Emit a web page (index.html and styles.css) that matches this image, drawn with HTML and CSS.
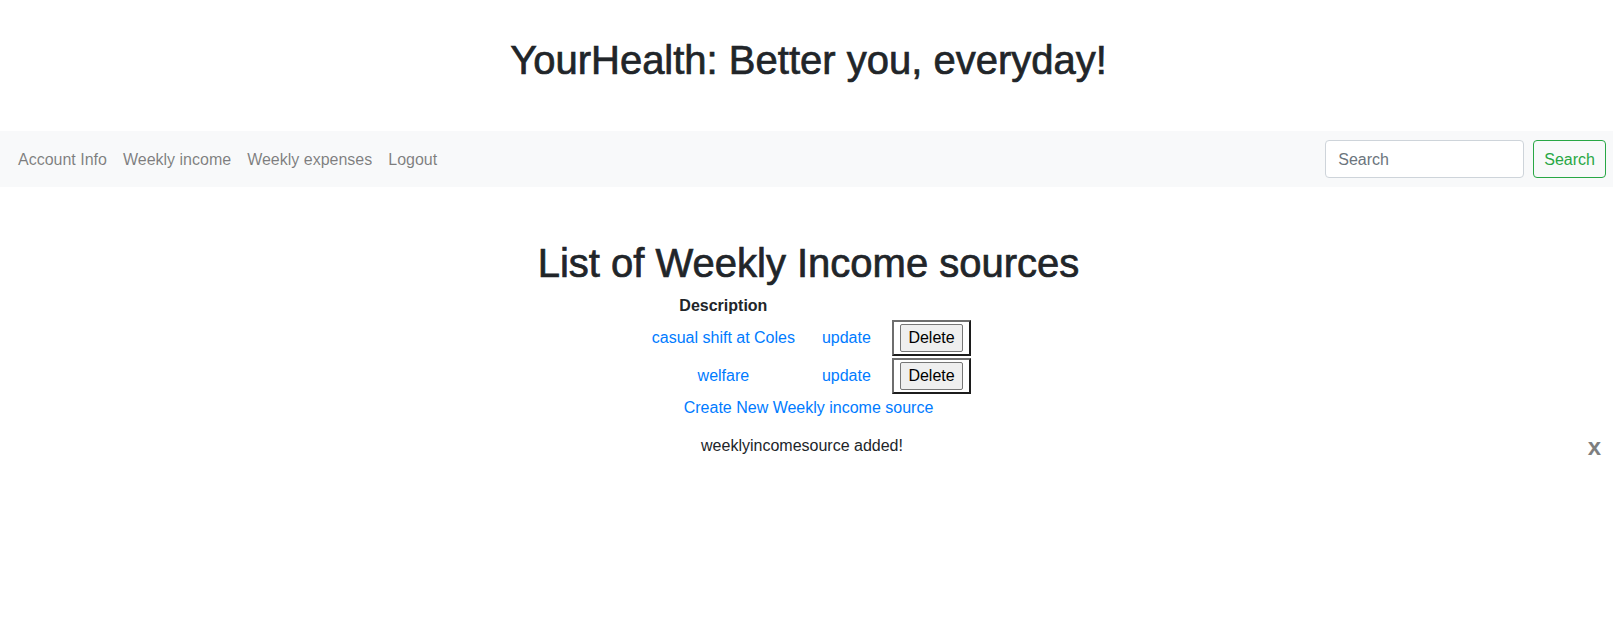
FILE: index.html
```html
<!DOCTYPE html>
<html lang="en">
<head>
<meta charset="utf-8">
<title>YourHealth</title>
<link rel="stylesheet" href="styles.css">
</head>
<body>
<header class="site-header">
  <h1 class="site-title">YourHealth: Better you, everyday!</h1>
</header>
<nav class="navbar">
  <ul class="nav-links">
    <li><a class="nav-link" href="#">Account Info</a></li>
    <li><a class="nav-link" href="#">Weekly income</a></li>
    <li><a class="nav-link" href="#">Weekly expenses</a></li>
    <li><a class="nav-link" href="#">Logout</a></li>
  </ul>
  <form class="search-form">
    <input class="search-input" type="search" placeholder="Search">
    <button class="search-btn" type="button">Search</button>
  </form>
</nav>
<main class="content">
  <h1 class="page-title">List of Weekly Income sources</h1>
  <table class="income-table">
    <thead>
      <tr><th class="col-desc">Description</th><th class="col-update"></th><th class="col-blank"></th></tr>
    </thead>
    <tbody>
      <tr>
        <td class="col-desc"><a href="#">casual shift at Coles</a></td>
        <td class="col-update"><a href="#">update</a></td>
        <td class="col-delete"><button class="delete-btn" type="button">Delete</button></td>
      </tr>
      <tr>
        <td class="col-desc"><a href="#">welfare</a></td>
        <td class="col-update"><a href="#">update</a></td>
        <td class="col-delete"><button class="delete-btn" type="button">Delete</button></td>
      </tr>
    </tbody>
  </table>
  <div class="create-row"><a href="#">Create New Weekly income source</a></div>
  <div class="alert">
    <span class="alert-msg">weeklyincomesource added!</span>
    <button class="close" type="button">x</button>
  </div>
</main>
</body>
</html>
```
FILE: styles.css
```css
* { box-sizing: border-box; }

body {
  margin: 0;
  font-family: "Liberation Sans", Arial, sans-serif;
  font-size: 16px;
  line-height: 1.5;
  color: #212529;
  background: #fff;
}

a { color: #007bff; text-decoration: none; }

.site-header {
  padding: 36px 0 47px 4px;
  text-align: center;
}

.site-title,
.page-title {
  margin: 0;
  font-size: 40px;
  line-height: 48px;
  font-weight: 500;
  color: #212529;
  -webkit-text-stroke: 0.7px #212529;
}

.navbar {
  display: flex;
  align-items: center;
  justify-content: space-between;
  height: 56px;
  padding: 8px 7px 8px 10px;
  background: #f8f9fa;
}

.nav-links {
  display: flex;
  margin: 0;
  padding: 0;
  list-style: none;
}

.nav-link {
  display: block;
  padding: 9px 8px 7px;
  color: rgba(0, 0, 0, 0.5);
}

.search-form {
  display: flex;
  align-items: center;
  gap: 9px;
}

.search-input {
  width: 199px;
  height: 38px;
  padding: 7px 12px 5px;
  font: inherit;
  color: #495057;
  background: #fff;
  border: 1px solid #ced4da;
  border-radius: 4px;
}

.search-input::placeholder { color: #6c757d; }

.search-btn {
  height: 38px;
  padding: 7px 10px 5px;
  font: inherit;
  color: #28a745;
  background: transparent;
  border: 1px solid #28a745;
  border-radius: 4px;
}

.content {
  padding-left: 4px;
  text-align: center;
}

.page-title {
  margin: 52px 0 5px;
}

.income-table {
  margin: 0 auto;
  border-collapse: separate;
  border-spacing: 2px;
}

.income-table th,
.income-table td {
  padding: 0;
  text-align: center;
  vertical-align: middle;
  line-height: 24px;
}

.income-table th { font-weight: 700; }

.col-desc { width: 154px; }
.col-update { width: 88px; }

.col-delete {
  padding: 2px 6px !important;
  border-style: solid;
  border-width: 2px;
  border-color: #6e6e6e #1c1c1c #1c1c1c #6e6e6e;
}

.delete-btn {
  display: block;
  height: 28px;
  padding: 1px 7px;
  font: inherit;
  line-height: 24px;
  color: #000;
  background: #efefef;
  border: 1px solid #767676;
  border-radius: 2px;
}

.create-row {
  line-height: 24px;
}

.alert {
  position: relative;
  margin-top: 14px;
  padding-right: 13px;
  line-height: 24px;
}

.close {
  position: absolute;
  top: 1px;
  right: 12px;
  padding: 0;
  font: inherit;
  font-size: 24px;
  font-weight: 700;
  line-height: 1;
  color: #000;
  opacity: 0.5;
  background: transparent;
  border: 0;
  text-shadow: 0 1px 0 #fff;
}
```
